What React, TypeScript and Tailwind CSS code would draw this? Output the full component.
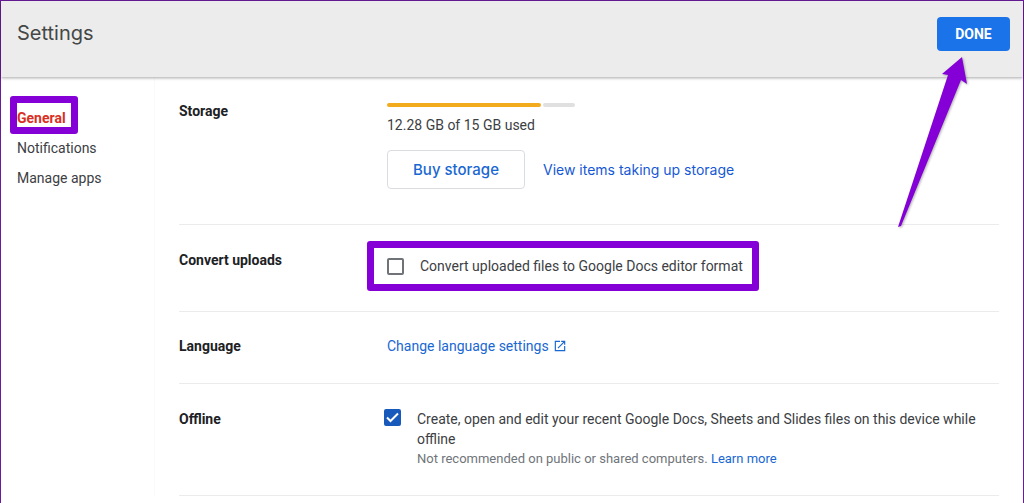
import React from 'react';

interface SectionProps {
  title: string;
  className?: string;
  children: React.ReactNode;
}

const navItems = [
  { label: 'General', active: true },
  { label: 'Notifications', active: false },
  { label: 'Manage apps', active: false },
];

const storage = { used: 12.28, total: 15 };

function Section({ title, className = '', children }: SectionProps) {
  return (
    <section className={`flex items-start border-b border-[#ebebeb] ${className}`}>
      <h2 className="w-52 shrink-0 text-sm leading-5 font-bold text-[#202124]">{title}</h2>
      <div className="min-w-0 flex-1">{children}</div>
    </section>
  );
}

function Highlight({ className }: { className: string }) {
  return (
    <span
      aria-hidden="true"
      className={`pointer-events-none absolute rounded-[3px] border-[7px] border-[#8400d6] ${className}`}
    />
  );
}

function Arrow() {
  return (
    <svg
      aria-hidden="true"
      className="pointer-events-none absolute top-14 right-[54px] z-20 drop-shadow-[1px_1px_1px_rgba(0,0,0,0.3)]"
      width="72"
      height="174"
      viewBox="0 0 72 174"
    >
      <path d="M65 0 L70 27 L64 23 L4 169 L1 170 L51 18 L45 17 Z" fill="#8400d6" />
    </svg>
  );
}

function OpenInNewIcon() {
  return (
    <svg width="14" height="14" viewBox="0 0 24 24" fill="currentColor" aria-hidden="true">
      <path d="M19 19H5V5h7V3H3v18h18v-9h-2v7zM14 3v2h3.6l-9.8 9.8 1.4 1.4L19 6.4V10h2V3h-7z" />
    </svg>
  );
}

export default function App() {
  return (
    <div className="relative min-h-screen border border-b-0 border-[#6a1b9a] bg-white font-['Roboto',sans-serif] text-sm text-[#3c4043]">
      <header className="relative z-10 flex h-[76px] items-start justify-between bg-[#ececec] px-4 pt-4 pr-[13px] shadow-[0_1px_3px_rgba(0,0,0,0.35)]">
        <h1 className="font-['Inter','Roboto',sans-serif] text-xl leading-8 text-[#444746]">
          Settings
        </h1>
        <button
          type="button"
          className="h-[34px] w-[73px] rounded-sm bg-[#1a73e8] text-sm font-bold text-white"
        >
          DONE
        </button>
      </header>
      <Arrow />

      <div className="flex">
        <nav className="w-[154px] shrink-0 border-r border-[#fafafa] pt-[26px] pl-4">
          <ul>
            {navItems.map((item) => (
              <li key={item.label} className="flex h-[30px] items-center">
                <a
                  href="#"
                  className={item.active ? 'relative font-bold text-[#d93025]' : 'text-[#3c4043]'}
                >
                  {item.label}
                  {item.active && <Highlight className="-top-3 -right-3 -bottom-1.5 -left-[7px]" />}
                </a>
              </li>
            ))}
          </ul>
        </nav>

        <main className="min-w-0 flex-1 px-6">
          <Section title="Storage" className="pt-6 pb-[35px]">
            <div className="mt-0.5 flex h-1 w-[188px] gap-0.5">
              <div
                className="rounded-full bg-[#f2ab1d]"
                style={{ width: `${(storage.used / storage.total) * 100}%` }}
              />
              <div className="flex-1 rounded-full bg-[#e0e0e0]" />
            </div>
            <p className="mt-2 leading-5">
              {storage.used} GB of {storage.total} GB used
            </p>
            <div className="mt-[15px] flex items-center gap-[18px] font-['Inter','Roboto',sans-serif]">
              <button
                type="button"
                className="h-[39px] w-[138px] rounded border border-[#dadce0] text-[15px] font-medium text-[#1967d2]"
              >
                Buy storage
              </button>
              <a href="#" className="leading-5 text-[#1558d6]">
                View items taking up storage
              </a>
            </div>
          </Section>

          <Section title="Convert uploads" className="pt-[25px] pb-[35px]">
            <label className="relative mt-1.5 flex h-5 w-fit items-center gap-4">
              <input
                type="checkbox"
                className="h-[17px] w-[17px] appearance-none rounded-xs border-2 border-[#6f7377]"
              />
              Convert uploaded files to Google Docs editor format
              <Highlight className="-top-[15px] -right-4 -bottom-[15px] -left-5" />
            </label>
          </Section>

          <Section title="Language" className="pt-6 pb-[27px]">
            <a href="#" className="flex w-fit items-center gap-1 leading-5 text-[#1967d2]">
              Change language settings
              <OpenInNewIcon />
            </a>
          </Section>

          <Section title="Offline" className="pt-[25px] pb-[26px]">
            <div className="-ml-[3px] flex items-start gap-4">
              <span className="relative h-[17px] w-[17px] shrink-0">
                <input
                  id="offline"
                  type="checkbox"
                  defaultChecked
                  className="peer block h-[17px] w-[17px] appearance-none rounded-xs border-2 border-[#6f7377] checked:border-[#185abc] checked:bg-[#185abc]"
                />
                <svg
                  aria-hidden="true"
                  className="pointer-events-none absolute inset-0 hidden peer-checked:block"
                  width="17"
                  height="17"
                  viewBox="0 0 17 17"
                  fill="none"
                >
                  <path d="M3 8.5l3.5 3.5L14 4.5" stroke="#fff" strokeWidth="2" />
                </svg>
              </span>
              <div>
                <label htmlFor="offline" className="block leading-5">
                  Create, open and edit your recent Google Docs, Sheets and Slides files on this
                  device while offline
                </label>
                <p className="text-[13px] leading-5 text-[#70757a]">
                  Not recommended on public or shared computers.{' '}
                  <a href="#" className="text-[#1967d2]">
                    Learn more
                  </a>
                </p>
              </div>
            </div>
          </Section>
        </main>
      </div>
    </div>
  );
}
